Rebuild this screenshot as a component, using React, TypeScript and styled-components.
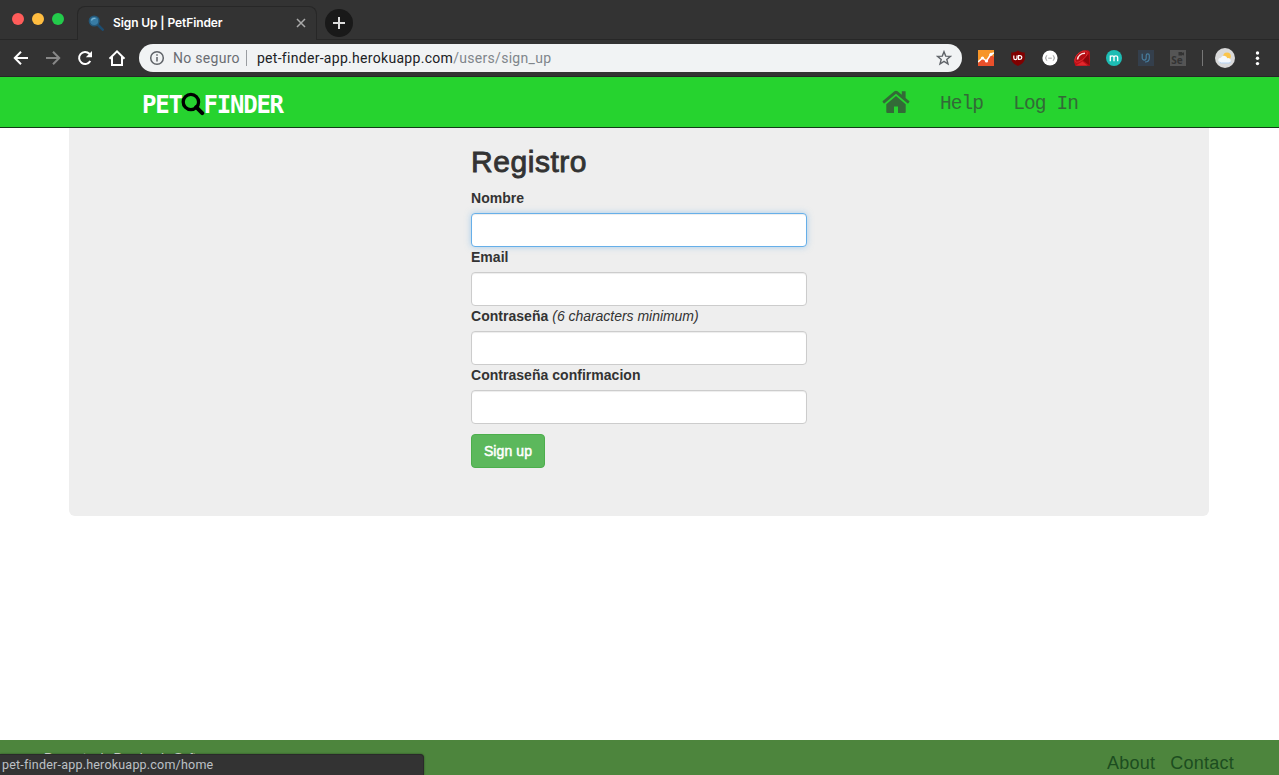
import React from "react";
import styled, { createGlobalStyle } from "styled-components";

const GlobalStyle = createGlobalStyle`
  * { box-sizing: border-box; }
  html, body, #root { height: 100%; }
  body { margin: 0; overflow: hidden; background: #fff; color: #333;
    font: 14px/20px "Liberation Sans", Helvetica, Arial, sans-serif; }
`;

const Window = styled.div`
  position: relative;
  display: flex;
  flex-direction: column;
  width: 1279px;
  height: 775px;
  overflow: hidden;
  background: #fff;
`;

/* Browser chrome */
const TabStrip = styled.div`
  display: flex;
  flex: none;
  height: 40px;
  padding: 6px 0 0 12px;
  background: #333;
  box-shadow: inset 0 -1px #272727;
`;
const Lights = styled.div`
  display: flex;
  gap: 8px;
  width: 65px;
  padding-top: 7px;
`;
const Light = styled.span<{ $color: string }>`
  width: 12px;
  height: 12px;
  border-radius: 50%;
  background: ${(p) => p.$color};
`;
const Tab = styled.div`
  display: flex;
  align-items: center;
  width: 240px;
  height: 34px;
  padding: 0 10px 2px;
  border: 1px solid #272727;
  border-bottom: 0;
  border-radius: 8px 8px 0 0;
  background: #333;
`;
const TabTitle = styled.span`
  flex: 1;
  margin-left: 9px;
  color: #fff;
  font: 600 12px/16px Inter, sans-serif;
  letter-spacing: -0.1px;
  white-space: pre;
`;
const NewTab = styled.span`
  display: grid;
  place-items: center;
  width: 28px;
  height: 28px;
  margin: 3px 0 0 8px;
  border-radius: 50%;
  background: #191919;
`;
const Toolbar = styled.div`
  display: flex;
  flex: none;
  align-items: center;
  height: 37px;
  padding: 0 0 1px 12px;
  background: #333;
  border-bottom: 1px solid #262626;

  > * { flex: none; }
`;
const NavButtons = styled.div`
  display: flex;
  gap: 14px;
  width: 127px;
`;
const AddressBar = styled.div`
  display: flex;
  align-items: center;
  width: 823px;
  height: 28px;
  padding: 0 10px;
  border-radius: 14px;
  background: #f1f3f4;
  color: #202124;
  font: 14px/20px Roboto, sans-serif;
`;
const Security = styled.span`
  margin-left: 8px;
  padding-right: 6px;
  border-right: 1px solid #9a9da1;
  color: #6a6d72;
  line-height: 16px;
  letter-spacing: 0.29px;
`;
const Url = styled.span`
  flex: 1;
  margin-left: 10px;
  letter-spacing: 0.3px;
`;
const UrlPath = styled.span`
  color: #80868b;
`;
const Extensions = styled.div`
  display: flex;
  align-items: center;
  gap: 16px;
  margin-left: 16px;
`;
const Divider = styled.span`
  width: 1px;
  height: 16px;
  margin: 0 12px 0 16px;
  background: #777;
`;

/* Site */
const SiteHeader = styled.header`
  display: flex;
  flex: none;
  justify-content: space-between;
  height: 51px;
  padding: 0 201px 0 142px;
  border-bottom: 1px solid #123b18;
  background: #26d32f;
`;
const Brand = styled.div`
  display: flex;
  align-items: center;
  padding-top: 5px;
  color: #fff;
  font: bold 24px/24px "DejaVu Sans Mono", monospace;
  letter-spacing: -1.25px;

  svg { margin: -2px -1px 0 -1px; }
`;
const SiteNav = styled.nav`
  display: flex;
  align-items: center;
  padding-top: 3px;
  color: #336a37;
  font: 19.5px/24px "Liberation Mono", monospace;
  letter-spacing: -0.9px;

  svg { margin-top: -3px; }
`;
const SiteLink = styled.span`
  margin-left: 30px;
  white-space: pre;
`;
const Panel = styled.main`
  flex: none;
  width: 1140px;
  height: 388px;
  margin-left: 69px;
  padding: 16px 402px 0;
  border-radius: 0 0 6px 6px;
  background: #eee;
`;
const Title = styled.h2`
  margin: 0 0 9px;
  color: #333;
  font-size: 30px;
  font-weight: 400;
  line-height: 35px;
  letter-spacing: 0.55px;
  -webkit-text-stroke: 0.9px #333;
`;
const Field = styled.div`
  display: flex;
  flex-direction: column;
  height: 59px;
`;
const Label = styled.label`
  height: 25px;
  font-weight: 700;
  letter-spacing: 0.03px;
`;
const Hint = styled.em`
  font-weight: 400;
  letter-spacing: -0.03px;
`;
const Input = styled.input<{ $active?: boolean }>`
  width: 336px;
  height: 34px;
  padding: 6px 12px;
  outline: 0;
  border: 1px solid ${(p) => (p.$active ? "#66afe9" : "#ccc")};
  border-radius: 4px;
  background: #fff;
  box-shadow: inset 0 1px 1px rgba(0, 0, 0, 0.075)
    ${(p) => (p.$active ? ", 0 0 6px rgba(102, 175, 233, 0.5)" : "")};
`;
const Submit = styled.button`
  width: 74px;
  height: 34px;
  margin-top: 10px;
  padding: 0;
  border: 1px solid #4cae4c;
  border-radius: 4px;
  background: #5cb85c;
  color: #fff;
  font: 14px/20px "Liberation Sans", Arial, sans-serif;
  letter-spacing: 0.1px;
  -webkit-text-stroke: 0.5px #fff;
`;
const Footer = styled.footer`
  display: flex;
  flex: none;
  justify-content: space-between;
  height: 35px;
  margin-top: auto;
  padding: 8px 45px 0 44px;
  background: #4d853d;
`;
const Credit = styled.span`
  color: #e4ece1;
  font-size: 13px;
  letter-spacing: -0.3px;
`;
const FooterLinks = styled.div`
  display: flex;
  gap: 15px;
  padding-top: 4px;
  color: #1c4d20;
  font-size: 18px;
  line-height: 22px;
  letter-spacing: 0.25px;
`;
const StatusBubble = styled.div`
  position: absolute;
  left: 0;
  bottom: 0;
  width: 424px;
  height: 21px;
  padding-left: 2px;
  border: 1px solid #2a2a2a;
  border-width: 1px 1px 0 0;
  border-radius: 0 4px 0 0;
  background: #333;
  box-shadow: 0 0 2px rgba(0, 0, 0, 0.5);
  color: #bdc1c6;
  font: 12.5px/20px Roboto, sans-serif;
  letter-spacing: 0.21px;
`;

const stroke = { fill: "none", strokeWidth: 2 };

const Favicon = () => (
  <svg width="16" height="16" viewBox="0 0 16 16">
    <path d="M10 10l4.7 4.7" stroke="#1d4d70" strokeWidth="2.5" strokeLinecap="round" />
    <circle cx="6.2" cy="6" r="4.8" fill="#387ca5" stroke="#245879" strokeWidth="1.5" />
    <path d="M3.5 5.5a3 3 0 0 1 4-2" fill="none" stroke="#79b4d2" strokeWidth="1.2" />
  </svg>
);

const Navigation = () => (
  <NavButtons>
    <svg width="18" height="18" viewBox="0 0 18 18" stroke="#fff" {...stroke}>
      <path d="M16 9H3M9 2.8L2.8 9 9 15.2" />
    </svg>
    <svg width="18" height="18" viewBox="0 0 18 18" stroke="#888" {...stroke}>
      <path d="M2 9h13M9 2.8L15.2 9 9 15.2" />
    </svg>
    <svg width="18" height="18" viewBox="0 0 18 18">
      <path d="M14.3 12A6 6 0 1 1 13.4 4.8L14.5 6" stroke="#fff" {...stroke} />
      <path d="M16 2v6.2H9.8z" fill="#fff" />
    </svg>
    <svg width="18" height="18" viewBox="0 0 18 18" stroke="#fff" {...stroke}>
      <path d="M1.5 9.7L9 2.3l7.5 7.4M4 8v8h10V8" />
    </svg>
  </NavButtons>
);

const ExtensionIcons = () => (
  <Extensions>
    <svg width="16" height="16" viewBox="0 0 16 16">
      <path fill="#f79528" d="M0 0h16v16H0z" />
      <path fill="#e9502b" d="M0 13l4.5-4 4 2L13 4.5 16 7v9H0z" />
      <path d="M0 12l4.5-4 4 3L13 4l3-1" fill="none" stroke="#fff" strokeWidth="1.5" />
      <g fill="#fff">
        <circle cx="4.5" cy="8" r="1.6" />
        <circle cx="8.5" cy="11" r="1.6" />
        <circle cx="13" cy="4.3" r="1.6" />
      </g>
    </svg>
    <svg width="16" height="16" viewBox="0 0 16 16">
      <path d="M8 .5c2 1.4 4 2 6.8 2.1V8c0 4-2.8 6.3-6.8 8-4-1.7-6.8-4-6.8-8V2.6C4 2.5 6 1.9 8 .5z" fill="#800000" />
      <path d="M3.8 5.4v2.7a1.6 1.6 0 0 0 3.2 0V5.4M8.5 5.6h1.4a1.9 1.9 0 0 1 0 3.8H8.5z" fill="none" stroke="#fff" strokeWidth="1.2" />
    </svg>
    <svg width="16" height="16" viewBox="0 0 16 16">
      <circle cx="8" cy="8" r="7.6" fill="#fff" />
      <path d="M5.2 5.5q-1.4 0-1.1 1.5.2 1-.9 1 1.1 0 .9 1-.3 1.5 1.1 1.5M10.8 5.5q1.4 0 1.1 1.5-.2 1 .9 1-1.1 0-.9 1 .3 1.5-1.1 1.5M6.2 8.2h3.6" fill="none" stroke="#999" strokeWidth=".9" />
    </svg>
    <svg width="16" height="16" viewBox="0 0 16 16">
      <path d="M8.500.5L14 .3l1.8 1.5.2 14-5-.1-9.500.2L0 12l.5-3z" fill="#c01018" />
      <path d="M0 0h7L0 8z" fill="#333" />
      <path d="M1 11C.5 5.500 6 .5 11.500 1.200c3 .6 2 4.300-1.500 7.300S2 13.500 1 11z" fill="#b30d13" stroke="#e02c30" />
      <path d="M3.500 9.500C4 6 7 3.300 11 3.300" fill="none" stroke="#ffe1df" strokeWidth="1.600" />
      <path d="M14.500 4l1.300 11.500L9 10.500z" fill="#8d070c" />
      <path d="M2 15.500l6.500-4 5 4z" fill="#e2272c" />
    </svg>
    <svg width="16" height="16" viewBox="0 0 16 16">
      <circle cx="8" cy="8" r="8" fill="#1dbdb4" />
      <path d="M4.3 11.3V5.6M4.3 7.5c0-2 3.7-2.2 3.7 0v3.8M8 7.5c0-2 3.7-2.2 3.7 0v3.8" fill="none" stroke="#fff" strokeWidth="1.3" />
    </svg>
    <svg width="16" height="16" viewBox="0 0 16 16">
      <path fill="#343f4c" d="M0 0h16v16H0z" />
      <path d="M4.200 3.800v4a2.200 2.200 0 0 0 2.200 2.300q1.800 0 1.800-2.300V5.500q0-1.700 1.500-1.700 1.600 0 1.600 1.700V8q0 4-4.300 4" fill="none" stroke="#477c9d" strokeWidth="1.200" />
    </svg>
    <svg width="16" height="16" viewBox="0 0 16 16">
      <path fill="#555" d="M0 0h16v16H0z" />
      <path fill="#333" d="M8.500 2h3.700v1L14 2.200v3.300l-1.800-.8v.8H8.500z" />
      <text x="1.200" y="14" fill="#333" fontFamily="Open Sans" fontWeight="700" fontSize="10">Se</text>
    </svg>
  </Extensions>
);

const Weather = () => (
  <svg width="20" height="20" viewBox="0 0 20 20">
    <circle cx="10" cy="10" r="10" fill="#d9d9d9" />
    <circle cx="12" cy="8.3" r="3.8" fill="#fbc44a" />
    <path d="M6 15a2.600 2.600 0 0 1-.2-5.200 3.600 3.600 0 0 1 6.600.4A2.500 2.500 0 0 1 14 15z" fill="#f4f8fd" />
    <path d="M4 13.500q.8 1.500 2.500 1.500H14q1.500 0 2-1.400" fill="none" stroke="#b5d3f3" />
  </svg>
);

const Home = () => (
  <svg width="28" height="24" viewBox="0 0 28 24" fill="#336a37">
    <path d="M14 6.100L4.300 14.300V22q0 1 1 1H12v-6.500h4V23h6.700q1 0 1-1v-7.700z" />
    <path d="M27.200 11.100L23.600 8V1.300h-3.800v3.500L15.600 1.300q-1.600-1.200-3.200 0L.8 11.100q-.5.4-.1.9l1 1.200q.4.4.9 0L14 3.700l11.400 9.500q.5.4.9 0l1-1.200q.4-.5-.1-.9z" />
  </svg>
);

export default function App() {
  return (
    <Window>
      <GlobalStyle />
      <TabStrip>
        <Lights>
          <Light $color="#ff5c5a" />
          <Light $color="#ffbd40" />
          <Light $color="#23cb4b" />
        </Lights>
        <Tab>
          <Favicon />
          <TabTitle>Sign Up | PetFinder</TabTitle>
          <svg width="10" height="10" viewBox="0 0 10 10" stroke="#aaa" strokeWidth="1.5">
            <path d="M1 1l8 8M9 1L1 9" />
          </svg>
        </Tab>
        <NewTab>
          <svg width="12" height="12" viewBox="0 0 12 12" stroke="#ddd" strokeWidth="2">
            <path d="M6 0v12M0 6h12" />
          </svg>
        </NewTab>
      </TabStrip>
      <Toolbar>
        <Navigation />
        <AddressBar>
          <svg width="16" height="16" viewBox="0 0 16 16" fill="none" stroke="#5f6368" strokeWidth="1.5">
            <circle cx="8" cy="8" r="6.3" />
            <path d="M8 7v4.5M8 4.3v1.5" />
          </svg>
          <Security>No seguro</Security>
          <Url>pet-finder-app.herokuapp.com<UrlPath>/users/sign_up</UrlPath></Url>
          <svg width="16" height="16" viewBox="0 0 16 16" fill="none" stroke="#5f6368" strokeWidth="1.4">
            <path d="M8 1.700l1.700 4.400 4.700.3-3.600 3 1.200 4.600L8 11.400 4 14l1.200-4.600-3.600-3 4.700-.3z" />
          </svg>
        </AddressBar>
        <ExtensionIcons />
        <Divider />
        <Weather />
        <svg width="44" height="16" viewBox="0 0 44 16" fill="#fff">
          <circle cx="22.5" cy="3" r="1.7" />
          <circle cx="22.5" cy="8.3" r="1.7" />
          <circle cx="22.5" cy="13.6" r="1.7" />
        </svg>
      </Toolbar>
      <SiteHeader>
        <Brand>
          PET
          <svg width="24" height="24" viewBox="0 0 24 24" fill="none" stroke="#000">
            <circle cx="9.9" cy="10" r="7.7" strokeWidth="3.3" />
            <path d="M15.2 15.2l6 6" strokeWidth="4" strokeLinecap="round" />
          </svg>
          FINDER
        </Brand>
        <SiteNav>
          <Home />
          <SiteLink>Help</SiteLink>
          <SiteLink>Log In</SiteLink>
        </SiteNav>
      </SiteHeader>
      <Panel>
        <Title>Registro</Title>
        <Field>
          <Label>Nombre</Label>
          <Input $active />
        </Field>
        <Field>
          <Label>Email</Label>
          <Input />
        </Field>
        <Field>
          <Label>Contraseña <Hint>(6 characters minimum)</Hint></Label>
          <Input type="password" />
        </Field>
        <Field>
          <Label>Contraseña confirmacion</Label>
          <Input type="password" />
        </Field>
        <Submit>Sign up</Submit>
      </Panel>
      <Footer>
        <Credit>Proyecto de Prueba de Software</Credit>
        <FooterLinks>
          <span>About</span>
          <span>Contact</span>
        </FooterLinks>
      </Footer>
      <StatusBubble>pet-finder-app.herokuapp.com/home</StatusBubble>
    </Window>
  );
}
